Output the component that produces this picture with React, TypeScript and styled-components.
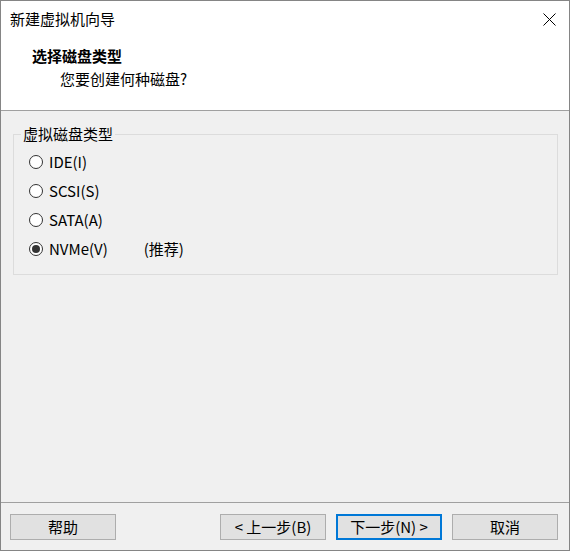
import styled, { createGlobalStyle } from 'styled-components';
import { FC } from 'react';

const GlobalStyle = createGlobalStyle`
    html, body {
        margin: 0;
        padding: 0;
        background: #ffffff;
    }
    * {
        box-sizing: border-box;
    }
`;

const font = `"Noto Sans CJK SC", "Noto Sans", sans-serif`;

/*
 * Window frame
 */

const Window = styled.div`
    width: 570px;
    height: 551px;
    border: 1px solid #858585;
    display: flex;
    flex-direction: column;
    font-family: ${font};
    font-size: 15px;
    color: #000;
    background: #f0f0f0;
`;

const TitleBar = styled.div`
    height: 36px;
    display: flex;
    align-items: center;
    justify-content: space-between;
    padding: 0 13px 0 9px;
    background: #ffffff;
`;

const TitleText = styled.span`
    line-height: 20px;
`;

const CloseIcon: FC = () => (
    <svg width="13" height="13" viewBox="0 0 13 13" fill="none">
        <path d="M0.5 0.5 L12.5 12.5 M12.5 0.5 L0.5 12.5" stroke="#000" strokeWidth="1" />
    </svg>
);

/*
 * Wizard header
 */

const Header = styled.div`
    height: 74px;
    background: #ffffff;
    border-bottom: 1px solid #a0a0a0;
    padding: 9px 0 0 31px;
`;

const Heading = styled.div`
    font-weight: 700;
    line-height: 20px;
`;

const SubHeading = styled.div`
    line-height: 20px;
    margin: 3px 0 0 28px;
`;

/*
 * Body with group box
 */

const Body = styled.div`
    flex: 1;
    padding: 13px 11px 0 12px;
`;

const Group = styled.fieldset`
    margin: 0;
    border: 1px solid #dcdcdc;
    padding: 3px 0 11px 15px;
`;

const Legend = styled.legend`
    padding: 0 2px;
    margin-left: -8px;
    line-height: 20px;
`;

const Row = styled.label`
    display: flex;
    align-items: center;
    height: 29px;
`;

const Radio = styled.span<{ $checked?: boolean }>`
    width: 14px;
    height: 14px;
    border-radius: 50%;
    border: 1px solid #333333;
    background: #ffffff;
    display: flex;
    align-items: center;
    justify-content: center;
    margin-right: 6px;

    &::after {
        content: '';
        display: ${(props) => (props.$checked ? 'block' : 'none')};
        width: 8px;
        height: 8px;
        border-radius: 50%;
        background: #333333;
    }
`;

const RowText = styled.span`
    line-height: 20px;
`;

const Note = styled.span`
    line-height: 20px;
    margin-left: 36px;
`;

/*
 * Footer buttons
 */

const Footer = styled.div`
    height: 48px;
    border-top: 1px solid #a0a0a0;
    display: flex;
    align-items: flex-start;
    padding: 11px 11px 0 9px;
`;

const Spacer = styled.div`
    flex: 1;
`;

const Button = styled.button<{ $focused?: boolean; $gap?: number }>`
    width: 106px;
    height: 26px;
    margin-left: ${(props) => props.$gap ?? 0}px;
    background: #e1e1e1;
    border: ${(props) => (props.$focused ? '2px solid #0078d7' : '1px solid #adadad')};
    font-family: ${font};
    font-size: 15px;
    color: #000;
    padding: 0;
    line-height: 20px;
`;

const options = [
    { label: 'IDE(I)', checked: false },
    { label: 'SCSI(S)', checked: false },
    { label: 'SATA(A)', checked: false },
    { label: 'NVMe(V)', checked: true, note: '(推荐)' },
];

const App: FC = () => {
    return (
        <>
            <GlobalStyle />
            <Window>
                <TitleBar>
                    <TitleText>新建虚拟机向导</TitleText>
                    <CloseIcon />
                </TitleBar>
                <Header>
                    <Heading>选择磁盘类型</Heading>
                    <SubHeading>您要创建何种磁盘?</SubHeading>
                </Header>
                <Body>
                    <Group>
                        <Legend>虚拟磁盘类型</Legend>
                        {options.map((o) => (
                            <Row key={o.label}>
                                <Radio $checked={o.checked} />
                                <RowText>{o.label}</RowText>
                                {o.note && <Note>{o.note}</Note>}
                            </Row>
                        ))}
                    </Group>
                </Body>
                <Footer>
                    <Button>帮助</Button>
                    <Spacer />
                    <Button>&lt; 上一步(B)</Button>
                    <Button $focused $gap={10}>下一步(N) &gt;</Button>
                    <Button $gap={10}>取消</Button>
                </Footer>
            </Window>
        </>
    );
};

export default App;
